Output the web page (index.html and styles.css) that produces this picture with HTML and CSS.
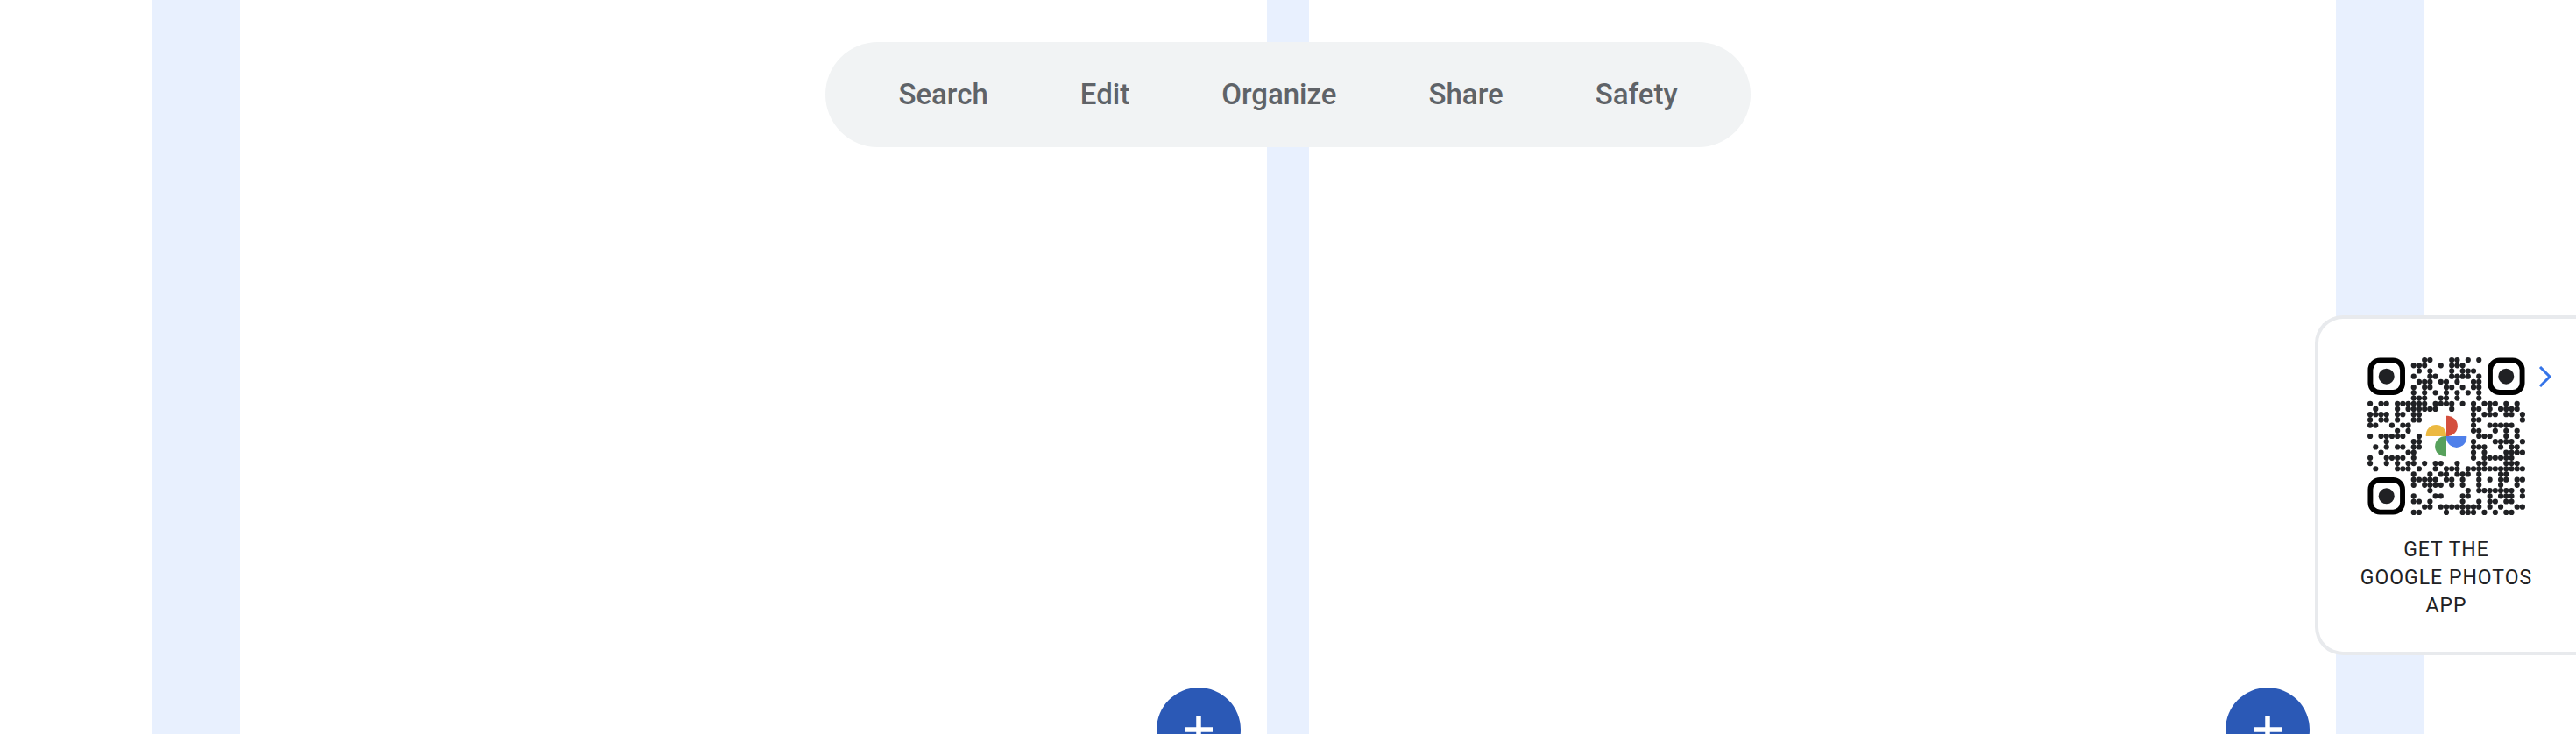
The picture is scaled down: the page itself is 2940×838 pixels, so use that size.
FILE: index.html
```html
<!DOCTYPE html>
<html lang="en">
<head>
<meta charset="utf-8">
<title>Google Photos</title>
<link rel="stylesheet" href="styles.css">
</head>
<body>
<main class="stage">
  <section class="panel">
    <button class="fab" type="button" aria-label="Expand">
      <svg class="fab-icon" viewBox="0 0 32 32" aria-hidden="true"><path d="M16 0v32M0 16h32"/></svg>
    </button>
  </section>
  <section class="panel">
    <button class="fab" type="button" aria-label="Expand">
      <svg class="fab-icon" viewBox="0 0 32 32" aria-hidden="true"><path d="M16 0v32M0 16h32"/></svg>
    </button>
  </section>
</main>

<header class="topbar">
  <nav class="tabs">
    <a class="tab" href="#search">Search</a>
    <a class="tab" href="#edit">Edit</a>
    <a class="tab" href="#organize">Organize</a>
    <a class="tab" href="#share">Share</a>
    <a class="tab" href="#safety">Safety</a>
  </nav>
</header>

<aside class="app-card">
  <svg class="qr" viewBox="-0.5 -0.5 29 29" role="img" aria-label="QR code for the Google Photos app">
    <path class="qr-dots" id="qr-dots"/>
    <g class="qr-ring">
      <rect x="0.05" y="0.05" width="5.9" height="5.9" rx="1.75"/>
      <rect x="22.05" y="0.05" width="5.9" height="5.9" rx="1.75"/>
      <rect x="0.05" y="22.05" width="5.9" height="5.9" rx="1.75"/>
    </g>
    <g class="qr-eye">
      <circle cx="3" cy="3" r="1.45"/>
      <circle cx="25" cy="3" r="1.45"/>
      <circle cx="3" cy="25" r="1.45"/>
    </g>
    <path fill="#d44f3e" d="M14 14V10.25h.2a1.87 1.87 0 0 1 0 3.75z"/>
    <path fill="#4f80ea" d="M14 14h3.75v.2a1.87 1.87 0 0 1-3.75 0z"/>
    <path fill="#57a15c" d="M14 14v3.75h-.2a1.87 1.87 0 0 1 0-3.75z"/>
    <path fill="#ecb941" d="M14 14h-3.75v-.2a1.87 1.87 0 0 1 3.75 0z"/>
  </svg>
  <p class="app-text">Get the<br>Google Photos<br>app</p>
  <button class="collapse" type="button" aria-label="Collapse">
    <svg class="collapse-icon" viewBox="0 0 16 24" aria-hidden="true"><path d="M2 1l11 11L2 23"/></svg>
  </button>
</aside>
<script src="qr.js"></script>
</body>
</html>
```
FILE: styles.css
```css
* {
  box-sizing: border-box;
}

body {
  margin: 0;
  height: 100vh;
  overflow: hidden;
  position: relative;
  background: #fff;
  font-family: Roboto, "Liberation Sans", sans-serif;
}

.stage {
  display: grid;
  grid-template-columns: 1fr 1fr;
  gap: 48px;
  height: 100%;
  margin: 0 174px;
  padding: 0 100px;
  overflow: hidden;
  background: #e8f0fe;
}

.panel {
  position: relative;
  background: #fff;
}

.fab {
  position: absolute;
  right: 30px;
  bottom: -43px;
  display: flex;
  align-items: center;
  justify-content: center;
  width: 96px;
  height: 96px;
  padding: 0;
  border: 0;
  border-radius: 50%;
  background: #2b59b6;
}

.fab-icon {
  width: 32px;
  height: 32px;
  fill: none;
  stroke: #fff;
  stroke-width: 5.5;
}

.topbar {
  position: absolute;
  top: 48px;
  left: 0;
  right: 0;
  display: flex;
  justify-content: center;
}

.tabs {
  display: flex;
  align-items: center;
  gap: 105px;
  height: 120px;
  padding: 0 83px;
  border-radius: 60px;
  background: #f1f3f4;
}

.tab {
  color: #5f6368;
  font-size: 33px;
  font-weight: 500;
  line-height: 48px;
  text-decoration: none;
}

.app-card {
  position: absolute;
  top: 360px;
  right: 0;
  display: flex;
  flex-direction: column;
  align-items: center;
  gap: 24px;
  width: 298px;
  padding: 44px 2px 36px 0;
  border: 4px solid #e8eaed;
  border-right: 0;
  border-radius: 32px 0 0 32px;
  background: #fff;
}

.qr {
  width: 180px;
  height: 180px;
}

.qr-dots {
  fill: none;
  stroke: #202124;
  stroke-width: 1;
  stroke-linecap: round;
}

.qr-ring {
  fill: none;
  stroke: #000;
  stroke-width: 0.95;
}

.qr-eye {
  fill: #202124;
}

.app-text {
  margin: 0;
  color: #202124;
  font-size: 23px;
  line-height: 32px;
  letter-spacing: 1px;
  text-align: center;
  text-transform: uppercase;
}

.collapse {
  position: absolute;
  top: 54px;
  right: 27px;
  display: flex;
  padding: 0;
  border: 0;
  background: none;
}

.collapse-icon {
  width: 16px;
  height: 24px;
  fill: none;
  stroke: #3574e8;
  stroke-width: 3;
}
```
FILE: qr.js
```js
// Filled columns of each QR row; "a-b" is a run.
const rows = [
  "10-11 15-16 18 20",
  "8-10 13 15-17",
  "9 11 15 17-19",
  "8 11-12 15-18 20",
  "9-11 13-14 16 19-20",
  "8 10-11 14-15 17 19-20",
  "8 10 12 14 16 18 20",
  "8-10 13-14 16 20",
  "0 2-3 5-10 12-15 17 19 21-23 25 27",
  "1 5 7-12 15 19-20 22 24-27",
  "0-3 5-6 8-9 19 21-23 25-26 28",
  "0 2-3 5 8-9 19-20 28",
  "0-1 4 6-7 19 22-26",
  "5 7 19-20 23 25 27",
  "0 2-6 9 20-22 25 27",
  "3 8-9 19 23-26 28",
  "1 3 5-6 8-9 19-21 24 26-27",
  "2 7-8 19 21 25-28",
  "0 3-6 8 19 21-26",
  "0 3 5 7-8 10 12-13 16 20-21 25-27",
  "1 5-7 9 12 14-16 18-28",
  "8 11 13-14 16-18 20 24-25",
  "8-12 14-15 17 20 22 24-25 27-28",
  "8 10-13 15 17 20 24 27",
  "11 18 20-26 28",
  "8 12-13 17-18 22 24-26 28",
  "8-9 11 17 20 22-23 25-26",
  "10-11 13-20 22 24 27-28",
  "8-9 14 17-19 21 23 25-26"
];

let d = "";
rows.forEach((row, y) => {
  row.split(" ").forEach((part) => {
    const [start, end = start] = part.split("-").map(Number);
    for (let x = start; x <= end; x++) d += `M${x} ${y}h0`;
  });
});
document.getElementById("qr-dots").setAttribute("d", d);
```
